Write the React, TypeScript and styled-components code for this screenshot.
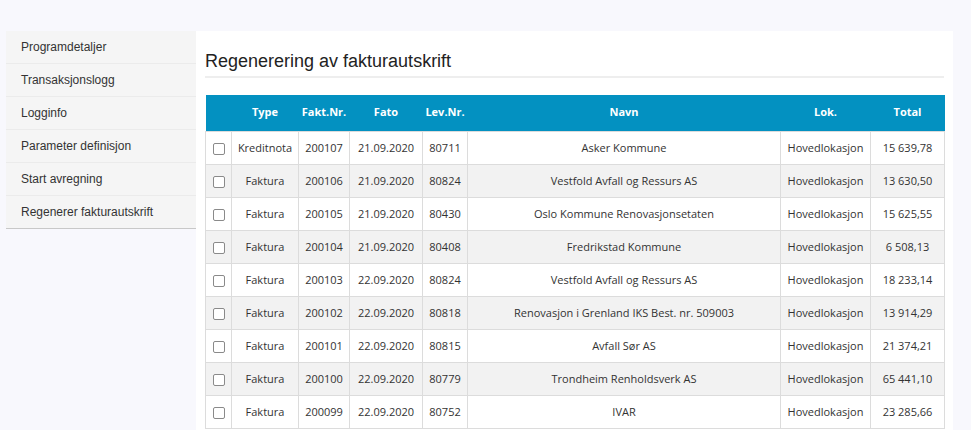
import React from 'react';
import styled, { createGlobalStyle } from 'styled-components';

interface Invoice {
  type: string;
  nr: string;
  date: string;
  lev: string;
  name: string;
  lok: string;
  total: string;
}

const menu = [
  'Programdetaljer',
  'Transaksjonslogg',
  'Logginfo',
  'Parameter definisjon',
  'Start avregning',
  'Regenerer fakturautskrift'
];

const invoices: Invoice[] = [
  { type: 'Kreditnota', nr: '200107', date: '21.09.2020', lev: '80711', name: 'Asker Kommune', lok: 'Hovedlokasjon', total: '15 639,78' },
  { type: 'Faktura', nr: '200106', date: '21.09.2020', lev: '80824', name: 'Vestfold Avfall og Ressurs AS', lok: 'Hovedlokasjon', total: '13 630,50' },
  { type: 'Faktura', nr: '200105', date: '21.09.2020', lev: '80430', name: 'Oslo Kommune Renovasjonsetaten', lok: 'Hovedlokasjon', total: '15 625,55' },
  { type: 'Faktura', nr: '200104', date: '21.09.2020', lev: '80408', name: 'Fredrikstad Kommune', lok: 'Hovedlokasjon', total: '6 508,13' },
  { type: 'Faktura', nr: '200103', date: '22.09.2020', lev: '80824', name: 'Vestfold Avfall og Ressurs AS', lok: 'Hovedlokasjon', total: '18 233,14' },
  { type: 'Faktura', nr: '200102', date: '22.09.2020', lev: '80818', name: 'Renovasjon i Grenland IKS Best. nr. 509003', lok: 'Hovedlokasjon', total: '13 914,29' },
  { type: 'Faktura', nr: '200101', date: '22.09.2020', lev: '80815', name: 'Avfall Sør AS', lok: 'Hovedlokasjon', total: '21 374,21' },
  { type: 'Faktura', nr: '200100', date: '22.09.2020', lev: '80779', name: 'Trondheim Renholdsverk AS', lok: 'Hovedlokasjon', total: '65 441,10' },
  { type: 'Faktura', nr: '200099', date: '22.09.2020', lev: '80752', name: 'IVAR', lok: 'Hovedlokasjon', total: '23 285,66' }
];

// column widths in the order they appear in the header
const columns: Array<[string, number]> = [
  ['', 26],
  ['Type', 67],
  ['Fakt.Nr.', 51],
  ['Fato', 73],
  ['Lev.Nr.', 45],
  ['Navn', 313],
  ['Lok.', 90],
  ['Total', 74]
];

const GlobalStyle = createGlobalStyle`
  html, body {
    margin: 0;
    padding: 0;
    background: #f8f8fd;
    overflow: hidden;
  }
`;

const Page = styled.div`
  display: flex;
  align-items: flex-start;
  padding: 31px 0 0 6px;
  height: 399px;
  box-sizing: content-box;
  font-family: 'Liberation Sans', Arial, sans-serif;
`;

const Sidebar = styled.nav`
  width: 190px;
  flex-shrink: 0;
  background: #f5f5f5;
  border-bottom: 1px solid #c8c8c8;
`;

const MenuItem = styled.div<{ $last?: boolean }>`
  height: 32px;
  padding-left: 15px;
  display: flex;
  align-items: center;
  font-size: 12px;
  color: #333;
  border-bottom: ${({ $last }) => ($last ? 'none' : '1px solid #ebebeb')};
`;

const Main = styled.main`
  width: 739px;
  padding: 0 9px;
  background: #fff;
  height: 100%;
`;

const Title = styled.h2`
  margin: 20px 0 0;
  padding-bottom: 4px;
  font-size: 18px;
  line-height: 21px;
  font-weight: normal;
  color: #222;
  border-bottom: 2px solid #eeeeee;
`;

const Table = styled.table`
  margin-top: 17px;
  border-collapse: collapse;
  table-layout: fixed;
  width: 739px;
  font-family: 'Open Sans', 'DejaVu Sans', sans-serif;
  font-size: 11px;
  color: #333;
`;

const HeadCell = styled.th`
  height: 33px;
  padding: 0 0 3px;
  background: #0391c1;
  color: #fff;
  font-weight: bold;
  text-align: center;
`;

const Row = styled.tr<{ $striped: boolean }>`
  background: ${({ $striped }) => ($striped ? '#f2f2f2' : '#fff')};
`;

const Cell = styled.td`
  height: 30px;
  padding: 0 0 2px;
  text-align: center;
  border: 1px solid #dcdcdc;
  white-space: nowrap;
  overflow: hidden;
`;

const Check = styled.span`
  display: inline-block;
  width: 10px;
  height: 10px;
  border: 1px solid #8a8a8a;
  border-radius: 2px;
  background: #fff;
  vertical-align: middle;
`;

export default function App (): React.ReactElement {
  return (
    <>
      <GlobalStyle />
      <Page>
        <Sidebar>
          {menu.map((label, i) => (
            <MenuItem key={label} $last={i === menu.length - 1}>{label}</MenuItem>
          ))}
        </Sidebar>
        <Main>
          <Title>Regenerering av fakturautskrift</Title>
          <Table>
            <colgroup>
              {columns.map(([label, width], i) => <col key={i} style={{ width }} />)}
            </colgroup>
            <thead>
              <tr>
                {columns.map(([label], i) => <HeadCell key={i}>{label}</HeadCell>)}
              </tr>
            </thead>
            <tbody>
              {invoices.map((inv, i) => (
                <Row key={inv.nr} $striped={i % 2 === 1}>
                  <Cell><Check /></Cell>
                  <Cell>{inv.type}</Cell>
                  <Cell>{inv.nr}</Cell>
                  <Cell>{inv.date}</Cell>
                  <Cell>{inv.lev}</Cell>
                  <Cell>{inv.name}</Cell>
                  <Cell>{inv.lok}</Cell>
                  <Cell>{inv.total}</Cell>
                </Row>
              ))}
            </tbody>
          </Table>
        </Main>
      </Page>
    </>
  );
}
